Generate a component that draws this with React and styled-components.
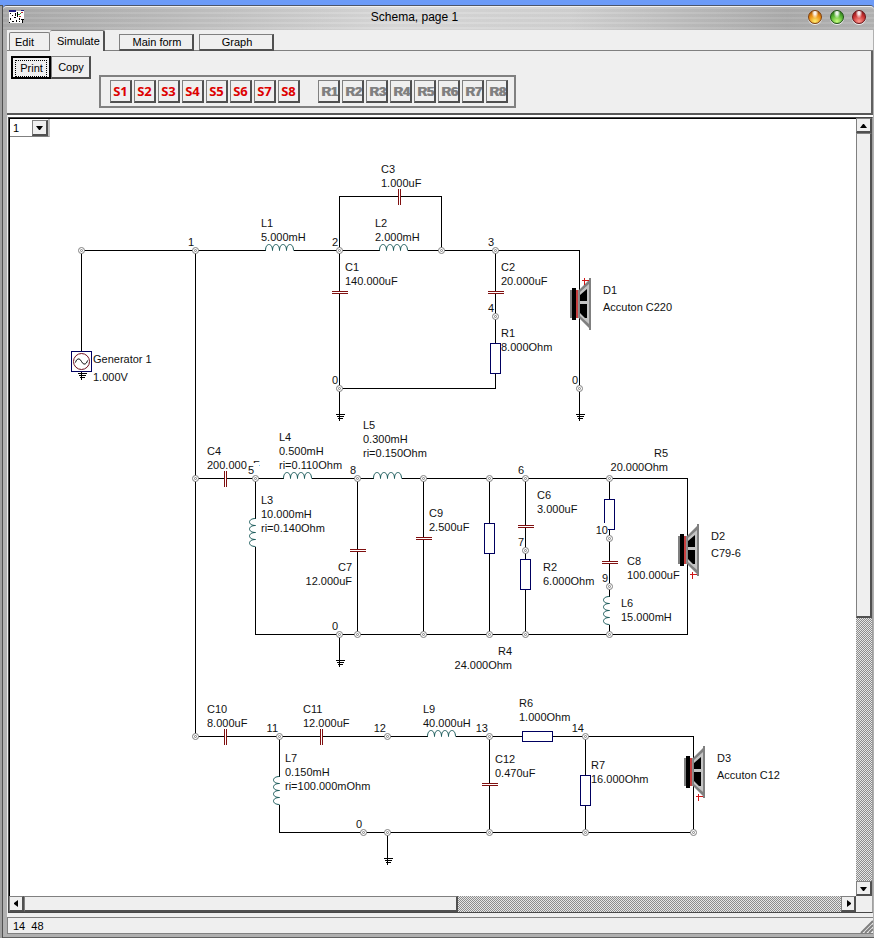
import React from 'react';
import styled, { createGlobalStyle } from 'styled-components';

const GlobalStyle = createGlobalStyle`
  * {
    box-sizing: border-box;
  }
  body {
    margin: 0;
    background: #6c9bf8;
    font-family: 'Liberation Sans', Arial, sans-serif;
    font-size: 11px;
    color: #000;
  }
  button, select {
    font: inherit;
    color: inherit;
    border-radius: 0;
    padding: 0;
  }
`;

const Desktop = styled.div`
  display: flex;
  min-height: 100vh;
  padding-top: 5px;
`;

const NeighbourEdge = styled.div`
  width: 3px;
  background: #a0a0a0;
  border-top: 1px solid #555;
  border-right: 1px solid #505050;
`;

const Window = styled.div`
  flex: 1;
  min-width: 0;
  display: flex;
  flex-direction: column;
  border-top: 1px solid #4c5568;
  border-bottom: 1px solid #606060;
  border-radius: 4px 4px 0 0;
  background: #b0b0b0;
`;

const TitleBar = styled.header`
  display: flex;
  align-items: center;
  height: 24px;
  padding: 0 8px 4px 6px;
  border-top: 1px solid #f2f2f2;
  border-radius: 4px 4px 0 0;
  background: repeating-linear-gradient(
      180deg,
      rgba(255, 255, 255, 0.08) 0 2px,
      rgba(90, 90, 90, 0.04) 2px 5px
    ),
    linear-gradient(90deg, #a9a9a9, #bdbdbd 20%, #dadada 45%, #d2d2d2 65%, #ababab 90%, #b4b4b4);
`;

const Title = styled.h1`
  flex: 1;
  margin: 0;
  padding-right: 4px;
  font-size: 12px;
  font-weight: 400;
  line-height: 20px;
  text-align: center;
`;

const WindowButtons = styled.div`
  display: flex;
  gap: 8px;
`;

const Orb = styled.button`
  width: 14px;
  height: 14px;
  border: 1px solid ${(props) => props.$edge};
  border-radius: 50%;
  background: radial-gradient(ellipse at 50% 15%, rgba(255, 255, 255, 0.9) 0 12%, transparent 40%),
    radial-gradient(circle at 50% 85%, ${(props) => props.$glow}, ${(props) => props.$tone} 55%, ${(props) => props.$edge});
  box-shadow: 0 1px 0 #eee;
`;

const Body = styled.div`
  flex: 1;
  display: flex;
  flex-direction: column;
  margin: 0 1px 3px 4px;
  background: #efefef;
`;

const TabRow = styled.nav`
  display: flex;
  align-items: flex-end;
  height: 21px;
  padding-left: 2px;
  border-bottom: 1px solid #808080;
`;

const Tab = styled.button`
  width: ${(props) => (props.$active ? '55px' : '41px')};
  height: ${(props) => (props.$active ? '21px' : '18px')};
  margin-bottom: ${(props) => (props.$active ? '-1px' : '0')};
  padding: 0 0 0 ${(props) => (props.$active ? '7px' : '5px')};
  text-align: left;
  background: #efefef;
  border: 1px solid #808080;
  border-bottom: none;
  border-left-width: ${(props) => (props.$active ? '0' : '1px')};
  border-right: ${(props) => (props.$active ? '2px solid #505050' : '1px solid #808080')};
  border-radius: 2px 2px 0 0;
`;

const PageButton = styled.button`
  width: 75px;
  height: 17px;
  margin: 0 0 -1px ${(props) => (props.$first ? '14px' : '5px')};
  padding-left: 2px;
  background: #efefef;
  border: 1px solid #808080;
  border-right: 2px solid #505050;
  border-bottom: 2px solid #505050;
`;

const ToolPanel = styled.section`
  display: flex;
  align-items: flex-start;
  padding: 5px 4px;
  border-right: 2px solid #606060;
  border-bottom: 2px solid #585858;
`;

const ActionButton = styled.button`
  width: 40px;
  height: 23px;
  padding: 2px;
  background: #efefef;
  border: 1px solid #808080;
  border-right: 2px solid #505050;
  border-bottom: 2px solid #505050;
  ${(props) => props.$focused && 'border: 2px solid #000;'}
  span {
    display: block;
    padding-left: 1px;
    line-height: 15px;
    border: 1px ${(props) => (props.$focused ? 'dotted #000' : 'solid transparent')};
  }
`;

const SlotGroup = styled.div`
  display: flex;
  gap: 18px;
  margin: 19px 0 0 8px;
  padding: 3px 6px 3px 9px;
  border: 2px solid #808080;
`;

const SlotRow = styled.div`
  display: flex;
  gap: 2px;
`;

const SlotButton = styled.button`
  width: 22px;
  height: 23px;
  font-family: 'Noto Sans', sans-serif;
  font-size: 13px;
  font-weight: 700;
  line-height: 18px;
  text-align: center;
  overflow: hidden;
  background: #efefef;
  border: 1px solid #808080;
  border-right: 2px solid #505050;
  border-bottom: 2px solid #505050;
  color: #dd0000;
  &:disabled {
    padding: 2px 0 0 2px;
    font-family: 'Liberation Sans', Arial, sans-serif;
    color: #808080;
    text-shadow: 1px 0 0 #808080;
  }
`;

const Workspace = styled.main`
  flex: 1;
  display: grid;
  grid-template-columns: minmax(0, 1fr) 16px;
  grid-template-rows: 1fr 16px;
  margin: 2px 0 0 1px;
  border: 1px solid #484848;
  border-right-color: #a0a0a0;
  box-shadow: 0 -2px 0 #fff;
`;

const Canvas = styled.div`
  position: relative;
  min-width: 0;
  overflow: hidden;
  background: #fff;
  border-top: 1px solid #000;
  border-left: 1px solid #000;
`;

const PagePicker = styled.label`
  position: absolute;
  top: 0;
  left: 0;
  display: flex;
  align-items: center;
  width: 40px;
  height: 18px;
  background: #fff;
  border-right: 2px solid #c0c0c0;
  border-bottom: 1px solid #808080;
  select {
    flex: 1;
    width: 22px;
    height: 16px;
    padding-left: 3px;
    appearance: none;
    background: transparent;
    border: none;
  }
`;

const ArrowBox = styled.span`
  display: flex;
  align-items: center;
  justify-content: center;
  width: 16px;
  height: 16px;
  background: #efefef;
  border: 1px solid #808080;
  border-right: 2px solid #505050;
  border-bottom: 2px solid #505050;
`;

const Drawing = styled.svg`
  display: block;
  font-size: 11px;
  text {
    fill: #111;
    white-space: pre;
  }
`;

const Scrollbar = styled.div`
  display: flex;
  flex-direction: ${(props) => (props.$vertical ? 'column' : 'row')};
  background: repeating-conic-gradient(#8c8c8c 0 25%, #e6e6e6 0 50%) 0 0 / 2px 2px;
`;

const ScrollButton = styled.button`
  display: flex;
  flex: none;
  align-items: center;
  justify-content: center;
  width: ${(props) => (props.$vertical ? '16px' : '15px')};
  height: ${(props) => (props.$vertical ? '15px' : '16px')};
  background: #efefef;
  border: 1px solid #808080;
  border-right: 2px solid #505050;
  border-bottom: 2px solid #505050;
`;

const Thumb = styled.div`
  flex: ${(props) => props.$size};
  background: #efefef;
  border: 1px solid #808080;
  border-right: 2px solid #505050;
  border-bottom: 2px solid #505050;
`;

const Track = styled.div`
  flex: ${(props) => props.$size};
`;

const StatusBar = styled.footer`
  display: flex;
  align-items: center;
  justify-content: space-between;
  height: 17px;
  margin-top: 4px;
  padding-left: 5px;
  border-top: 1px solid #808080;
  border-bottom: 1px solid #808080;
  border-left: 1px solid #808080;
  white-space: pre;
  svg {
    align-self: flex-end;
  }
`;

const WINDOW_BUTTONS = [
  { name: 'Minimize', tone: '#e88a10', glow: '#ffef70', edge: '#80400c' },
  { name: 'Maximize', tone: '#52b030', glow: '#c8ff80', edge: '#1f5414' },
  { name: 'Close', tone: '#c83030', glow: '#ff9a90', edge: '#6a1418' },
];

const SLOTS = [1, 2, 3, 4, 5, 6, 7, 8];

const WIRES = [
  'M81 351V250H265M293 250H379M407 250H579V414',
  'M195 250V736',
  'M339 250V196H398M400 196H441V250',
  'M339 250V291M339 293V388H495V373',
  'M495 250V291M495 293V343',
  'M195 478H224M226 478H283M311 478H373M401 478H687V634H255V546M255 478V518',
  'M357 478V549M357 551V634',
  'M423 478V537M423 539V634',
  'M489 478V523M489 553V634',
  'M525 478V525M525 527V559M525 589V634',
  'M609 478V499M609 529V561M609 563V596M609 624V634',
  'M195 736H224M226 736H320M322 736H427M455 736H522M552 736H693V832H279V804M279 736V776',
  'M489 736V783M489 785V832',
  'M585 736V775M585 805V832',
];

const NODES = [
  [81, 250], [195, 250, '1'], [339, 250, '2'], [441, 250], [495, 250, '3'],
  [495, 316, '4'], [339, 388, '0'], [579, 388, '0'],
  [195, 478], [255, 478, '5'], [357, 478, '8'], [423, 478], [489, 478],
  [525, 478, '6'], [609, 478], [525, 550, '7'], [609, 538, '10'], [609, 586, '9'],
  [339, 634, '0'], [357, 634], [423, 634], [489, 634], [525, 634], [609, 634],
  [195, 736], [279, 736, '11'], [387, 736, '12'], [489, 736, '13'], [585, 736, '14'],
  [363, 832, '0'], [387, 832], [489, 832], [585, 832], [693, 832],
];

// x, y, vertical wire
const CAPACITORS = [
  [399, 196], [339, 292, true], [495, 292, true], [225, 478], [357, 550, true],
  [423, 538, true], [525, 526, true], [609, 562, true], [225, 736], [321, 736],
  [489, 784, true],
];

const COILS = [
  [265, 250], [379, 250], [283, 478], [373, 478], [427, 736],
  [255, 518, true], [609, 596, true], [279, 776, true],
];

const RESISTORS = [
  [495, 358, true], [489, 538, true], [525, 574, true], [609, 514, true],
  [537, 736], [585, 790, true],
];

const GROUNDS = [[339, 388], [579, 388], [339, 634], [387, 832]];

const SPEAKERS = [
  { x: 579, y: 304, plus: -24 },
  { x: 687, y: 550, plus: 24 },
  { x: 693, y: 772, plus: 24 },
];

// x, baseline of the first line, lines
const LABELS = [
  [381, 173, ['C3', '1.000uF']],
  [261, 227, ['L1', '5.000mH']],
  [375, 227, ['L2', '2.000mH']],
  [345, 271, ['C1', '140.000uF']],
  [501, 271, ['C2', '20.000uF']],
  [501, 337, ['R1', '8.000Ohm']],
  [207, 455, ['C4', '200.000uF']],
  [279, 441, ['L4', '0.500mH', 'ri=0.110Ohm']],
  [363, 429, ['L5', '0.300mH', 'ri=0.150Ohm']],
  [261, 504, ['L3', '10.000mH', 'ri=0.140Ohm']],
  [352, 571, ['C7', '12.000uF'], 'end'],
  [429, 517, ['C9', '2.500uF']],
  [512, 655, ['R4', '24.000Ohm'], 'end'],
  [537, 499, ['C6', '3.000uF']],
  [543, 571, ['R2', '6.000Ohm']],
  [668, 457, ['R5', '20.000Ohm'], 'end'],
  [627, 565, ['C8', '100.000uF']],
  [621, 607, ['L6', '15.000mH']],
  [207, 713, ['C10', '8.000uF']],
  [303, 713, ['C11', '12.000uF']],
  [423, 713, ['L9', '40.000uH']],
  [285, 762, ['L7', '0.150mH', 'ri=100.000mOhm']],
  [519, 707, ['R6', '1.000Ohm']],
  [495, 763, ['C12', '0.470uF']],
  [591, 769, ['R7', '16.000Ohm']],
];

const WIDE_LABELS = [
  [93, 363, ['Generator 1', '1.000V']],
  [603, 294, ['D1', 'Accuton C220']],
  [711, 540, ['D2', 'C79-6']],
  [717, 762, ['D3', 'Accuton C12']],
];

const Label = ({ x, y, lines, anchor = 'start', step }) =>
  lines.map((line, i) => (
    <text key={line} x={x} y={y + i * step} textAnchor={anchor}>
      {line}
    </text>
  ));

const Capacitor = ({ x, y, vertical }) => (
  <path
    d={
      vertical
        ? `M${x - 8} ${y - 1}h16M${x - 8} ${y + 1}h16`
        : `M${x - 1} ${y - 8}v16M${x + 1} ${y - 8}v16`
    }
    stroke='#801010'
    shapeRendering='crispEdges'
  />
);

const Coil = ({ x, y, vertical }) => (
  <path
    d={
      vertical
        ? `M${x} ${y}${'c-8 0 -8 7 0 7'.repeat(4)}`
        : `M${x} ${y}${'c0 -8 7 -8 7 0'.repeat(4)}`
    }
    stroke='#1c5c5c'
  />
);

const Resistor = ({ x, y, vertical }) => (
  <rect
    x={vertical ? x - 5 : x - 15}
    y={vertical ? y - 15 : y - 5}
    width={vertical ? 10 : 30}
    height={vertical ? 30 : 10}
    fill='#fff'
    stroke='#000060'
    shapeRendering='crispEdges'
  />
);

const Ground = ({ x, y }) => (
  <path
    d={`M${x} ${y}v32M${x - 4} ${y + 26}h9M${x - 3} ${y + 28}h7M${x - 2} ${y + 30}h5`}
    shapeRendering='crispEdges'
  />
);

const Node = ({ x, y }) => (
  <g stroke='#808080'>
    <circle cx={x} cy={y} r='3' fill='#fff' />
    <circle cx={x} cy={y} r='1' />
  </g>
);

const NodeNumber = ({ x, y, name }) => (
  <g stroke='none'>
    <rect
      x={x - 2 - name.length * 6}
      y={y - 15}
      width={name === '5' ? 12 : name.length * 6 + 1}
      height='12'
      fill='#fff'
    />
    <text x={x - 1} y={y - 4} textAnchor='end'>
      {name}
    </text>
  </g>
);

const Speaker = ({ x, y, plus }) => (
  <g transform={`translate(${x} ${y})`} stroke='none'>
    <rect x='-9' y='-14' width='3' height='28' fill='#808080' />
    <rect x='-7' y='-16' width='4' height='32' fill='#000' />
    <rect x='-3' y='-14' width='2' height='28' fill='#c84040' />
    <rect x='-1' y='-14' width='2' height='28' fill='#909090' />
    <path d='M0 -14L11 -25V25L0 14z' fill='#808080' />
    <path d='M1 -12L10 -20V20L1 12z' fill='#c4c4c4' />
    <path d='M1 -9L8 -15V-3H1zM1 0H8V14H6L1 9z' fill='#000' />
    <rect x='10' y='-26' width='2' height='52' fill='#808080' />
    <path
      d={`M2 ${plus}h7M5 ${plus - 3}v7`}
      transform='translate(0.5 0.5)'
      stroke='#d01818'
      shapeRendering='crispEdges'
    />
  </g>
);

const Schema = () => (
  <Drawing width='846' height='760' viewBox='10 119 846 760' role='img' aria-label='Crossover schematic'>
    <g transform='translate(0.5 0.5)' fill='none' stroke='#000'>
      <path d={WIRES.join('')} shapeRendering='crispEdges' />
      {RESISTORS.map(([x, y, vertical]) => (
        <Resistor key={`${x}-${y}`} x={x} y={y} vertical={vertical} />
      ))}
      {COILS.map(([x, y, vertical]) => (
        <Coil key={`${x}-${y}`} x={x} y={y} vertical={vertical} />
      ))}
      {GROUNDS.map(([x, y]) => (
        <Ground key={`${x}-${y}`} x={x} y={y} />
      ))}
      <rect x='71' y='351' width='20' height='20' stroke='#000060' shapeRendering='crispEdges' />
      <circle cx='81' cy='361' r='8' stroke='#701020' />
      <path d='M75 362c1 -4 4 -5 6 -1s5 3 6 -1' />
      <path d='M81 371v8M77 373h9M78 375h7M79 377h5' shapeRendering='crispEdges' />
    </g>
    {SPEAKERS.map(({ x, y, plus }) => (
      <Speaker key={x} x={x} y={y} plus={plus} />
    ))}
    {LABELS.map(([x, y, lines, anchor]) => (
      <Label key={lines[0]} x={x} y={y} lines={lines} anchor={anchor} step={14} />
    ))}
    {WIDE_LABELS.map(([x, y, lines]) => (
      <Label
        key={lines[0]}
        x={x}
        y={y}
        lines={lines}
        step={lines[0] === 'Generator 1' ? 18 : 17}
      />
    ))}
    {NODES.filter((node) => node[2]).map(([x, y, name]) => (
      <NodeNumber key={`${x}-${y}`} x={x} y={y} name={name} />
    ))}
    <g transform='translate(0.5 0.5)' fill='none'>
      {CAPACITORS.map(([x, y, vertical]) => (
        <Capacitor key={`${x}-${y}`} x={x} y={y} vertical={vertical} />
      ))}
      {NODES.map(([x, y]) => (
        <Node key={`${x}-${y}`} x={x} y={y} />
      ))}
    </g>
  </Drawing>
);

const ARROWS = {
  up: 'M0 6h7L4 2H3z',
  down: 'M0 2h7L4 6H3z',
  left: 'M5 0v7L1 4V3z',
  right: 'M2 0v7L6 4V3z',
};

const Arrow = ({ dir }) => (
  <svg width='7' height='7' viewBox='0 0 7 7' aria-hidden='true'>
    <path d={ARROWS[dir]} />
  </svg>
);

const AppIcon = () => (
  <svg width='16' height='14' viewBox='0 0 16 14' shapeRendering='crispEdges' aria-hidden='true'>
    <path d='M0 1h15v8h-1v4H0z' fill='#fff' />
    <path d='M0 0h7v2H0zM12 0h3v1h-3z' fill='#202080' />
    <path
      d='M1 3h1v1H1zM3 5h1v1H3zM1 8h1v2H1zM6 3h1v3H6zM5 7h2v1H5zM8 2h1v5H8zM3 11h2v1H3zM7 10h1v2H7zM10 8h1v2h-1zM10 11h1v1h-1zM12 9h3v1h-3zM13 10h1v3h-1zM0 12h1v1H0z'
      fill='#000'
    />
    <path d='M9 4h2v1H9zM11 3h1v1h-1z' fill='#30a030' />
    <path d='M12 2h2v1h-2zM10 6h2v1h-2z' fill='#c03030' />
  </svg>
);

const App = () => {
  return (
    <>
      <GlobalStyle />
      <Desktop>
        <NeighbourEdge />
        <Window>
          <TitleBar>
            <AppIcon />
            <Title>Schema, page 1</Title>
            <WindowButtons>
              {WINDOW_BUTTONS.map(({ name, tone, glow, edge }) => (
                <Orb key={name} aria-label={name} $tone={tone} $glow={glow} $edge={edge} />
              ))}
            </WindowButtons>
          </TitleBar>
          <Body>
            <TabRow>
              <Tab>Edit</Tab>
              <Tab $active>Simulate</Tab>
              <PageButton $first>Main form</PageButton>
              <PageButton>Graph</PageButton>
            </TabRow>
            <ToolPanel>
              <ActionButton $focused>
                <span>Print</span>
              </ActionButton>
              <ActionButton>
                <span>Copy</span>
              </ActionButton>
              <SlotGroup>
                <SlotRow>
                  {SLOTS.map((n) => (
                    <SlotButton key={n}>S{n}</SlotButton>
                  ))}
                </SlotRow>
                <SlotRow>
                  {SLOTS.map((n) => (
                    <SlotButton key={n} disabled>
                      R{n}
                    </SlotButton>
                  ))}
                </SlotRow>
              </SlotGroup>
            </ToolPanel>
            <Workspace>
              <Canvas>
                <Schema />
                <PagePicker>
                  <select aria-label='Page' defaultValue='1'>
                    <option>1</option>
                  </select>
                  <ArrowBox>
                    <Arrow dir='down' />
                  </ArrowBox>
                </PagePicker>
              </Canvas>
              <Scrollbar $vertical>
                <ScrollButton $vertical aria-label='Scroll up'>
                  <Arrow dir='up' />
                </ScrollButton>
                <Thumb $size={483} />
                <Track $size={264} />
                <ScrollButton $vertical aria-label='Scroll down'>
                  <Arrow dir='down' />
                </ScrollButton>
              </Scrollbar>
              <Scrollbar>
                <ScrollButton aria-label='Scroll left'>
                  <Arrow dir='left' />
                </ScrollButton>
                <Thumb $size={432} />
                <Track $size={384} />
                <ScrollButton aria-label='Scroll right'>
                  <Arrow dir='right' />
                </ScrollButton>
              </Scrollbar>
            </Workspace>
            <StatusBar>
              14  48
              <svg width='13' height='13' viewBox='0 0 13 13' stroke='#808080' strokeWidth='2' aria-hidden='true'>
                <path d='M1 13L13 1M5 13L13 5M9 13L13 9' />
              </svg>
            </StatusBar>
          </Body>
        </Window>
      </Desktop>
    </>
  );
};

export default App;
